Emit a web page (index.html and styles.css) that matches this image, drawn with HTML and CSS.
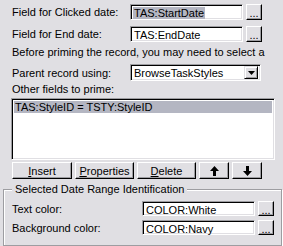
FILE: index.html
```html
<!DOCTYPE html>
<html>
<head>
<meta charset="utf-8">
<link rel="stylesheet" href="styles.css">
</head>
<body>
<div class="dlg">
  <div class="row r1">
    <span class="lbl">Field for Clicked date:</span>
    <div class="edit"><span class="sel">TAS:StartDate</span></div>
    <button class="ell">...</button>
  </div>
  <div class="row r2">
    <span class="lbl">Field for End date:</span>
    <div class="edit"><span class="txt">TAS:EndDate</span></div>
    <button class="ell">...</button>
  </div>
  <div class="note">Before priming the record, you may need to select a</div>
  <div class="row r4">
    <span class="lbl">Parent record using:</span>
    <div class="combo">
      <span class="txt">BrowseTaskStyles</span>
      <span class="drop"><svg width="7" height="4" viewBox="0 0 7 4"><polygon points="0,0 7,0 3.5,4" fill="#000"/></svg></span>
    </div>
  </div>
  <div class="note2">Other fields to prime:</div>
  <div class="list">
    <div class="item">TAS:StyleID = TSTY:StyleID</div>
  </div>
  <div class="btns">
    <button class="btn b-ins"><u>I</u>nsert</button>
    <button class="btn b-prop"><u>P</u>roperties</button>
    <button class="btn b-del"><u>D</u>elete</button>
    <button class="btn b-arr"><svg width="9" height="10" viewBox="0 0 9 10"><polygon points="4.5,0 9,5 6,5 6,10 3,10 3,5 0,5" fill="#000"/></svg></button>
    <button class="btn b-arr"><svg width="9" height="10" viewBox="0 0 9 10"><polygon points="4.5,10 9,5 6,5 6,0 3,0 3,5 0,5" fill="#000"/></svg></button>
  </div>
  <fieldset class="grp">
    <legend>Selected Date Range Identification</legend>
    <div class="row g1">
      <span class="lbl glbl">Text color:</span>
      <div class="edit small"><span class="txt">COLOR:White</span></div>
      <button class="ell small">...</button>
    </div>
    <div class="row g2">
      <span class="lbl glbl">Background color:</span>
      <div class="edit small"><span class="txt">COLOR:Navy</span></div>
      <button class="ell small">...</button>
    </div>
  </fieldset>
</div>
</body>
</html>
```

FILE: styles.css
```css
html, body {
  margin: 0;
  padding: 0;
}
body {
  background: #e0dfe3;
  font: 11px "Liberation Sans", Arial, sans-serif;
  color: #000;
  width: 283px;
  height: 246px;
  overflow: hidden;
}
.dlg {
  display: flex;
  flex-direction: column;
}
.row {
  display: flex;
  align-items: center;
  height: 16px;
}
.r1 { margin-top: 4px; }
.r2 { margin-top: 6px; }
.r4 { margin-top: 6px; height: 17px; }
.lbl {
  flex: none;
  width: 130px;
  padding-left: 12px;
  box-sizing: border-box;
  white-space: nowrap;
}
.glbl {
  padding-left: 0;
}
.edit, .combo, .list {
  box-sizing: border-box;
  background: #fff;
  border: 1px solid;
  border-color: #9d9da1 #fff #fff #9d9da1;
  box-shadow: inset 1px 1px 0 #000, inset -1px -1px 0 #e0dfe3;
}
.edit {
  flex: none;
  width: 113px;
  height: 16px;
  padding: 2px 0 0 2px;
  display: flex;
  align-items: center;
  line-height: 12px;
}
.edit.small { height: 15px; }
.sel {
  background: #b4b6c2;
  padding: 0 1px;
  height: 12px;
}
.txt { padding-left: 1px; }
button {
  font: inherit;
  color: #000;
  background: #e0dfe3;
  margin: 0;
  padding: 0;
  box-sizing: border-box;
  border: 1px solid;
  border-color: #fff #000 #000 #fff;
  box-shadow: inset -1px -1px 0 #9d9da1;
  border-radius: 0;
}
.ell {
  flex: none;
  margin-left: 3px;
  width: 16px;
  height: 16px;
  line-height: 10px;
  padding-top: 2px;
  display: flex;
  justify-content: center;
  align-items: center;
}
.ell.small { height: 15px; width: 16px; }
.note {
  margin-top: 4px;
  padding-left: 12px;
  line-height: 12px;
  white-space: nowrap;
}
.combo {
  flex: none;
  width: 131px;
  height: 17px;
  display: flex;
  align-items: center;
  padding: 2px;
  justify-content: space-between;
}
.drop {
  width: 14px;
  height: 13px;
  box-sizing: border-box;
  background: #e0dfe3;
  border: 1px solid;
  border-color: #e0dfe3 #000 #000 #e0dfe3;
  box-shadow: inset 1px 1px 0 #fff, inset -1px -1px 0 #9d9da1;
  display: flex;
  align-items: center;
  justify-content: center;
}
.note2 {
  margin-top: 2px;
  padding-left: 12px;
  line-height: 12px;
}
.list {
  margin: 3px 0 0 11px;
  width: 264px;
  height: 62px;
  padding: 2px;
}
.item {
  background: #b4b6c2;
  height: 12px;
  line-height: 12px;
  padding-left: 1px;
  white-space: nowrap;
}
.btns {
  display: flex;
  gap: 3px;
  margin: 2px 0 0 12px;
  height: 17px;
}
.btn {
  height: 17px;
  display: flex;
  align-items: center;
  justify-content: center;
}
.b-ins { width: 60px; }
.b-prop { width: 59px; }
.b-del { width: 59px; }
.b-arr { width: 30px; }
.btn u { text-decoration: underline; }
.grp {
  margin: 4px 1px 0 3px;
  padding: 0 0 10px 8px;
  border: 1px solid #9d9da1;
  box-shadow: inset 1px 1px 0 #fff, 1px 1px 0 #fff;
  min-width: 0;
}
.grp legend {
  padding: 0 3px;
  margin-left: 0;
  line-height: 12px;
  background: #e0dfe3;
  white-space: nowrap;
}
.g1 { margin-top: 6px; height: 15px; }
.g2 { margin-top: 4px; height: 15px; }
```
